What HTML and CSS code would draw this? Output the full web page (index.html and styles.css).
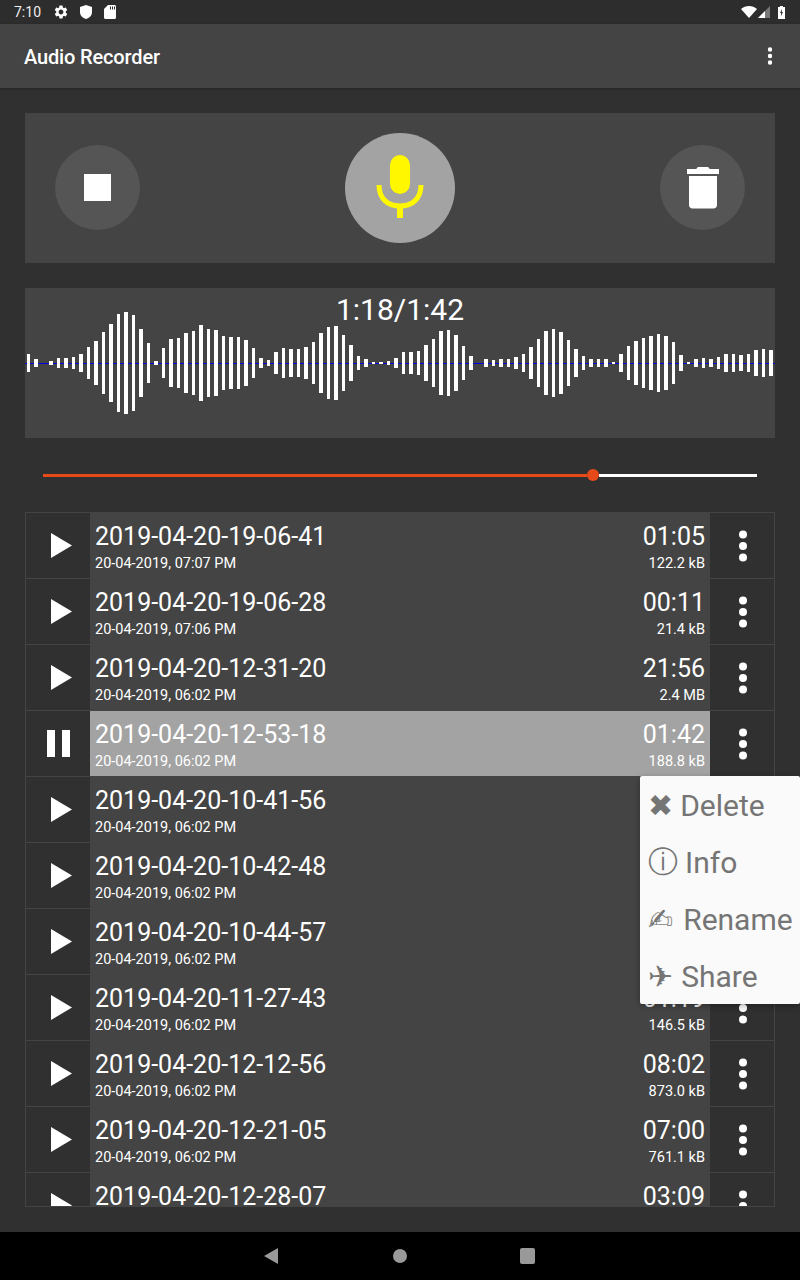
FILE: index.html
```html
<!DOCTYPE html>
<html lang="en">
  <head>
    <meta charset="UTF-8" />
    <title>Audio Recorder</title>
    <link rel="stylesheet" href="styles.css">
  </head>
  <body>
    <svg class="defs" width="0" height="0">
      <symbol id="play" viewBox="0 0 21 25"><path d="M0 0L21 12.5L0 25z" /></symbol>
      <symbol id="more" viewBox="0 0 8 32">
        <circle cx="4" cy="4.5" r="4" /><circle cx="4" cy="16" r="4" /><circle cx="4" cy="27.5" r="4" />
      </symbol>
    </svg>

    <div class="status-bar">
      <span class="clock">7:10</span>
      <svg class="status-icon gear" viewBox="0 0 24 24"><path d="M19.14 12.94c.04-.3.06-.61.06-.94 0-.32-.02-.64-.07-.94l2.03-1.58c.18-.14.23-.41.12-.61l-1.92-3.32c-.12-.22-.37-.29-.59-.22l-2.39.96c-.5-.38-1.03-.7-1.62-.94l-.36-2.54c-.04-.24-.24-.41-.48-.41h-3.84c-.24 0-.43.17-.47.41l-.36 2.54c-.59.24-1.13.57-1.62.94l-2.39-.96c-.22-.08-.47 0-.59.22L2.74 8.87c-.12.21-.08.47.12.61l2.03 1.58c-.05.3-.09.63-.09.94s.02.64.07.94l-2.03 1.58c-.18.14-.23.41-.12.61l1.92 3.32c.12.22.37.29.59.22l2.39-.96c.5.38 1.03.7 1.62.94l.36 2.54c.05.24.24.41.48.41h3.84c.24 0 .44-.17.47-.41l.36-2.54c.59-.24 1.13-.56 1.62-.94l2.39.96c.22.08.47 0 .59-.22l1.92-3.32c.12-.22.07-.47-.12-.61l-2.01-1.58zM12 15.6c-1.98 0-3.6-1.62-3.6-3.6s1.62-3.6 3.6-3.6 3.6 1.62 3.6 3.6-1.62 3.6-3.6 3.6z" /></svg>
      <svg class="status-icon shield" viewBox="0 0 12 14"><path d="M6 0L12 2V7C12 10.5 9.500 13 6 14C2.500 13 0 10.500 0 7V2z" /></svg>
      <svg class="status-icon sd" viewBox="0 0 12 14"><path d="M4 0H10.500C11.300 0 12 .7 12 1.500V12.500C12 13.300 11.300 14 10.500 14H1.500C.7 14 0 13.300 0 12.500V4zM6 1.500V4.500H7V1.500zM8 1.500V4.500H9V1.500zM10 1.500V4.500H11V1.500z" fill-rule="evenodd" /></svg>
      <span class="status-spacer"></span>
      <svg class="status-icon wifi" viewBox="0 0 16 12"><path d="M0 3C4.500 -1 11.500 -1 16 3L8 12z" /></svg>
      <svg class="status-icon signal" viewBox="0 0 12 12"><path d="M12 0V12H0z" fill="#777" /><path d="M7 5V12H0z" /></svg>
      <svg class="status-icon battery" viewBox="0 0 7 13"><path fill-rule="evenodd" d="M2 0H5V1H7V13H0V1H2zM4 3L2 7H3.200L2.800 10.500L5 6H3.800z" /></svg>
    </div>

    <header class="app-bar">
      <h1>Audio Recorder</h1>
      <svg class="app-menu" viewBox="0 0 8 32"><use href="#more" /></svg>
    </header>

    <main class="content">
      <section class="panel controls">
        <button class="round-btn">
          <span class="stop-icon"></span>
        </button>
        <button class="round-btn mic-btn">
          <svg width="48" height="64" viewBox="0 0 48 64">
            <rect x="14" y="0" width="20" height="39" rx="10" fill="#fff700" />
            <path d="M3 30C3 43 11 51 24 51S45 43 45 30" fill="none" stroke="#fff700" stroke-width="5" />
            <rect x="21" y="50" width="6" height="13" fill="#fff700" />
          </svg>
        </button>
        <button class="round-btn">
          <svg width="34" height="42" viewBox="0 0 34 42">
            <path d="M10.500 2C10.500 1 11.500 0 12.500 0H21.500C22.500 0 23.500 1 23.500 2H33V7H1V2z" fill="#fff" />
            <path d="M3 9H31V38C31 40 29.500 41.500 27.500 41.500H6.500C4.500 41.500 3 40 3 38z" fill="#fff" />
          </svg>
        </button>
      </section>

      <section class="panel wave-panel">
        <div class="wave" id="wave"></div>
        <div class="wave-time">1:18/1:42</div>
      </section>

      <div class="seekbar">
        <div class="seek-done"></div>
        <div class="seek-knob"></div>
        <div class="seek-rest"></div>
      </div>

      <section class="rec-list">
        <div class="rec-row">
          <div class="rec-btn"><svg class="play-icon"><use href="#play" /></svg></div>
          <div class="rec-info">
            <div class="rec-text"><div class="rec-name">2019-04-20-19-06-41</div><div class="rec-sub">20-04-2019, 07:07 PM</div></div>
            <div class="rec-meta"><div class="rec-name">01:05</div><div class="rec-sub">122.2 kB</div></div>
          </div>
          <div class="rec-btn rec-more"><svg class="more-icon"><use href="#more" /></svg></div>
        </div>
        <div class="rec-row">
          <div class="rec-btn"><svg class="play-icon"><use href="#play" /></svg></div>
          <div class="rec-info">
            <div class="rec-text"><div class="rec-name">2019-04-20-19-06-28</div><div class="rec-sub">20-04-2019, 07:06 PM</div></div>
            <div class="rec-meta"><div class="rec-name">00:11</div><div class="rec-sub">21.4 kB</div></div>
          </div>
          <div class="rec-btn rec-more"><svg class="more-icon"><use href="#more" /></svg></div>
        </div>
        <div class="rec-row">
          <div class="rec-btn"><svg class="play-icon"><use href="#play" /></svg></div>
          <div class="rec-info">
            <div class="rec-text"><div class="rec-name">2019-04-20-12-31-20</div><div class="rec-sub">20-04-2019, 06:02 PM</div></div>
            <div class="rec-meta"><div class="rec-name">21:56</div><div class="rec-sub">2.4 MB</div></div>
          </div>
          <div class="rec-btn rec-more"><svg class="more-icon"><use href="#more" /></svg></div>
        </div>
        <div class="rec-row active">
          <div class="rec-btn"><span class="pause-icon"><i></i><i></i></span></div>
          <div class="rec-info">
            <div class="rec-text"><div class="rec-name">2019-04-20-12-53-18</div><div class="rec-sub">20-04-2019, 06:02 PM</div></div>
            <div class="rec-meta"><div class="rec-name">01:42</div><div class="rec-sub">188.8 kB</div></div>
          </div>
          <div class="rec-btn rec-more"><svg class="more-icon"><use href="#more" /></svg></div>
        </div>
        <div class="rec-row">
          <div class="rec-btn"><svg class="play-icon"><use href="#play" /></svg></div>
          <div class="rec-info">
            <div class="rec-text"><div class="rec-name">2019-04-20-10-41-56</div><div class="rec-sub">20-04-2019, 06:02 PM</div></div>
          </div>
          <div class="rec-btn rec-more"></div>
        </div>
        <div class="rec-row">
          <div class="rec-btn"><svg class="play-icon"><use href="#play" /></svg></div>
          <div class="rec-info">
            <div class="rec-text"><div class="rec-name">2019-04-20-10-42-48</div><div class="rec-sub">20-04-2019, 06:02 PM</div></div>
          </div>
          <div class="rec-btn rec-more"></div>
        </div>
        <div class="rec-row">
          <div class="rec-btn"><svg class="play-icon"><use href="#play" /></svg></div>
          <div class="rec-info">
            <div class="rec-text"><div class="rec-name">2019-04-20-10-44-57</div><div class="rec-sub">20-04-2019, 06:02 PM</div></div>
          </div>
          <div class="rec-btn rec-more"></div>
        </div>
        <div class="rec-row">
          <div class="rec-btn"><svg class="play-icon"><use href="#play" /></svg></div>
          <div class="rec-info">
            <div class="rec-text"><div class="rec-name">2019-04-20-11-27-43</div><div class="rec-sub">20-04-2019, 06:02 PM</div></div>
            <div class="rec-meta"><div class="rec-name">01:19</div><div class="rec-sub">146.5 kB</div></div>
          </div>
          <div class="rec-btn rec-more"><svg class="more-icon"><use href="#more" /></svg></div>
        </div>
        <div class="rec-row">
          <div class="rec-btn"><svg class="play-icon"><use href="#play" /></svg></div>
          <div class="rec-info">
            <div class="rec-text"><div class="rec-name">2019-04-20-12-12-56</div><div class="rec-sub">20-04-2019, 06:02 PM</div></div>
            <div class="rec-meta"><div class="rec-name">08:02</div><div class="rec-sub">873.0 kB</div></div>
          </div>
          <div class="rec-btn rec-more"><svg class="more-icon"><use href="#more" /></svg></div>
        </div>
        <div class="rec-row">
          <div class="rec-btn"><svg class="play-icon"><use href="#play" /></svg></div>
          <div class="rec-info">
            <div class="rec-text"><div class="rec-name">2019-04-20-12-21-05</div><div class="rec-sub">20-04-2019, 06:02 PM</div></div>
            <div class="rec-meta"><div class="rec-name">07:00</div><div class="rec-sub">761.1 kB</div></div>
          </div>
          <div class="rec-btn rec-more"><svg class="more-icon"><use href="#more" /></svg></div>
        </div>
        <div class="rec-row">
          <div class="rec-btn"><svg class="play-icon"><use href="#play" /></svg></div>
          <div class="rec-info">
            <div class="rec-text"><div class="rec-name">2019-04-20-12-28-07</div></div>
            <div class="rec-meta"><div class="rec-name">03:09</div></div>
          </div>
          <div class="rec-btn rec-more"><svg class="more-icon"><use href="#more" /></svg></div>
        </div>
      </section>

      <div class="popup-menu">
        <div class="menu-item"><span class="menu-glyph">✖</span>Delete</div>
        <div class="menu-item"><span class="menu-glyph">ⓘ</span>Info</div>
        <div class="menu-item"><span class="menu-glyph glyph-rename">✍</span>Rename</div>
        <div class="menu-item"><span class="menu-glyph glyph-share">✈</span>Share</div>
      </div>
    </main>

    <nav class="nav-bar">
      <svg class="nav-back" width="14" height="16" viewBox="0 0 14 16"><path d="M14 0V16L0 8z" fill="#999" /></svg>
      <svg class="nav-home" width="14" height="14" viewBox="0 0 14 14"><circle cx="7" cy="7" r="7" fill="#999" /></svg>
      <span class="nav-square"></span>
    </nav>

    <script src="script.js"></script>
  </body>
</html>
```

FILE: styles.css
```css
* {
  box-sizing: border-box;
}

body {
  font-family: Roboto, "Liberation Sans", sans-serif;
  margin: 0;
  width: 800px;
  height: 1280px;
  display: flex;
  flex-direction: column;
  background-color: #303030;
  color: #fff;
  overflow: hidden;
  position: relative;
}

.defs {
  position: absolute;
}

.status-bar {
  height: 24px;
  display: flex;
  align-items: center;
  padding: 0 15px 0 14px;
  background-color: #2d2d2d;
  flex-shrink: 0;
}

.clock {
  font-size: 14px;
  color: #eee;
  width: 39px;
}

.status-icon {
  fill: #fff;
  display: block;
}

.gear {
  width: 16px;
  height: 16px;
}

.shield {
  width: 12px;
  height: 14px;
  margin-left: 11px;
}

.sd {
  width: 12px;
  height: 14px;
  margin-left: 12px;
}

.status-spacer {
  flex: 1;
}

.wifi {
  width: 16px;
  height: 12px;
}

.signal {
  width: 12px;
  height: 12px;
  margin-left: 1px;
}

.battery {
  width: 7px;
  height: 13px;
  margin-left: 8px;
}

.app-bar {
  height: 64px;
  flex-shrink: 0;
  display: flex;
  align-items: center;
  justify-content: space-between;
  padding: 0 26px 0 24px;
  background-color: #444;
  box-shadow: 0 1px 3px rgba(0, 0, 0, 0.25);
}

.app-bar h1 {
  margin: 2px 0 0;
  font-size: 20px;
  font-weight: 500;
  letter-spacing: -0.15px;
}

.app-menu {
  width: 8px;
  height: 18px;
  fill: #fff;
}

.content {
  flex: 1;
  padding: 25px 25px 0;
  position: relative;
}

.panel {
  height: 150px;
  background-color: #444;
}

.controls {
  display: flex;
  align-items: center;
  justify-content: space-between;
  padding: 0 30px;
  margin-bottom: 25px;
}

.round-btn {
  width: 85px;
  height: 85px;
  margin-bottom: 1px;
  border: none;
  border-radius: 50%;
  padding: 0;
  background-color: #555;
  display: flex;
  align-items: center;
  justify-content: center;
}

.mic-btn {
  width: 110px;
  height: 110px;
  margin-bottom: 0;
  padding-bottom: 2px;
  background-color: #a3a3a3;
}

.stop-icon {
  width: 27px;
  height: 27px;
  background-color: #fff;
}

.wave-panel {
  position: relative;
}

.wave {
  height: 150px;
  display: flex;
  align-items: center;
  gap: 4px;
  padding-left: 1.5px;
  background-image: linear-gradient(#0000e6, #0000e6);
  background-repeat: no-repeat;
  background-size: 100% 1px;
  background-position: 0 75px;
}

.wave-bar {
  width: 3.5px;
  flex-shrink: 0;
  background-color: #fff;
}

.wave-time {
  position: absolute;
  top: 4px;
  left: 0;
  right: 0;
  text-align: center;
  font-size: 30px;
  line-height: 35px;
}

.seekbar {
  height: 74px;
  display: flex;
  align-items: center;
  padding: 0 18px;
}

.seek-done {
  width: 544px;
  height: 3px;
  background-color: #e64a19;
}

.seek-knob {
  width: 12px;
  height: 12px;
  border-radius: 50%;
  background-color: #e64a19;
}

.seek-rest {
  flex: 1;
  height: 3px;
  background-color: #fff;
}

.rec-list {
  height: 695px;
  overflow: hidden;
  border: 1px solid #444;
  border-top: none;
  border-right: none;
}

.rec-row {
  height: 66px;
  display: flex;
  border-top: 1px solid #444;
}

.rec-btn {
  width: 64px;
  flex-shrink: 0;
  display: flex;
  align-items: center;
  justify-content: center;
}

.rec-more {
  width: 65px;
  padding-left: 1px;
  border-right: 1px solid #444;
}

.rec-info {
  flex: 1;
  display: flex;
  justify-content: space-between;
  padding: 9px 5px 0;
  margin-top: -1px;
  background-color: #444;
}

.rec-row.active .rec-info {
  background-color: #a3a3a3;
  margin-top: 0;
  padding-top: 8px;
}

.rec-meta {
  text-align: right;
}

.rec-name {
  font-size: 25px;
  line-height: 31px;
}

.rec-sub {
  font-size: 14.5px;
  line-height: 19px;
  margin-top: 2px;
}

.play-icon {
  width: 21px;
  height: 25px;
  margin-left: 6px;
  fill: #fff;
}

.more-icon {
  width: 8px;
  height: 32px;
  fill: #fff;
}

.pause-icon {
  display: flex;
  gap: 7px;
  margin-left: 1px;
}

.pause-icon i {
  width: 8px;
  height: 27px;
  background-color: #fff;
}

.popup-menu {
  position: absolute;
  top: 688px;
  right: 0;
  width: 160px;
  height: 228px;
  padding-left: 8px;
  background-color: #fafafa;
  border-radius: 2px;
  box-shadow: 0 2px 6px rgba(0, 0, 0, 0.3);
  color: #757575;
}

.menu-item {
  height: 57px;
  padding-top: 2px;
  display: flex;
  align-items: center;
  font-size: 30px;
  white-space: nowrap;
}

.menu-glyph {
  font-family: "DejaVu Sans", sans-serif;
  margin-right: 7px;
}

.glyph-rename {
  margin-right: 10px;
}

.glyph-share {
  margin-right: 8px;
}

.nav-bar {
  height: 48px;
  flex-shrink: 0;
  display: flex;
  align-items: center;
  padding-left: 264px;
  background-color: #000;
}

.nav-back {
  margin-right: 115px;
}

.nav-home {
  margin-right: 113px;
}

.nav-square {
  width: 15px;
  height: 16px;
  border-radius: 2px;
  background-color: #999;
}
```

FILE: script.js
```js
var heights = [
  18, 8, 0, 4, 10, 10, 12, 18, 32, 44, 62, 78, 98, 102, 96, 68, 40, 4, 30, 48,
  50, 60, 64, 76, 68, 66, 54, 52, 52, 46, 30, 10, 6, 22, 30, 28, 28, 32, 42, 60,
  72, 74, 56, 36, 14, 8, 2, 2, 4, 10, 22, 22, 24, 36, 48, 64, 66, 56, 34, 14,
  0, 8, 6, 8, 8, 12, 18, 32, 48, 64, 68, 62, 46, 28, 14, 8, 8, 8, 2, 18,
  34, 44, 50, 54, 58, 54, 42, 16, 2, 8, 10, 8, 12, 18, 18, 16, 18, 26, 28, 26,
];

var wave = document.getElementById("wave");
heights.forEach(function (h) {
  var bar = document.createElement("div");
  bar.className = "wave-bar";
  bar.style.height = h + "px";
  wave.appendChild(bar);
});
```
